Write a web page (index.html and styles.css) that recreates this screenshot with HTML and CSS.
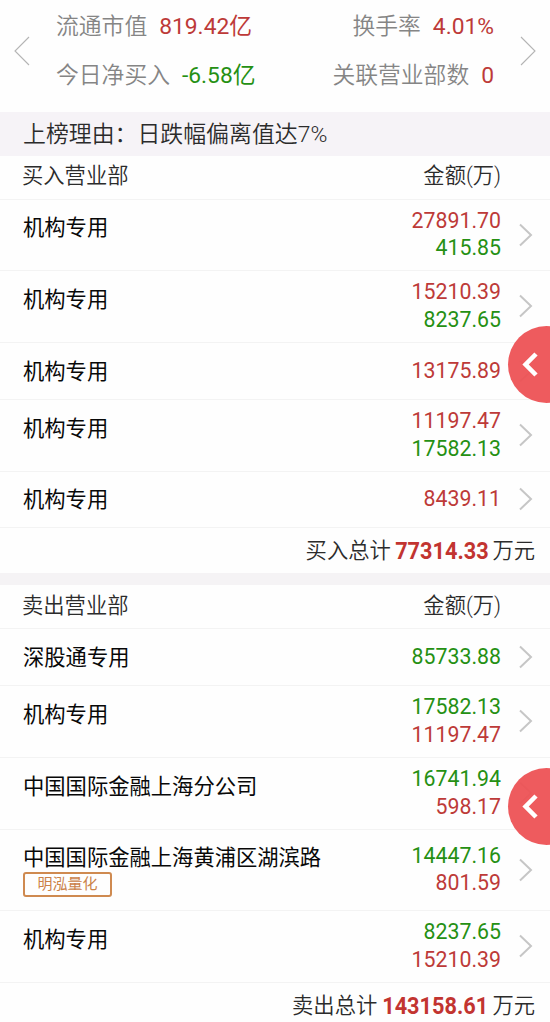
FILE: index.html
```html
<!DOCTYPE html>
<html lang="zh-CN">
<head>
<meta charset="utf-8">
<title>龙虎榜</title>
<link rel="stylesheet" href="styles.css">
</head>
<body>
<svg class="defs" width="0" height="0"><defs>
<symbol id="next" viewBox="0 0 14 24"><path d="M1 1.5 12 12 1 22.5" fill="none" stroke="#c6c6c6" stroke-width="2"/></symbol>
<symbol id="back" viewBox="0 0 16 26"><path d="M14 2 3.6 12.5 14 23" fill="none" stroke="#fff" stroke-width="4.6"/></symbol>
</defs></svg>
<main class="page">
<header class="summary">
<svg class="pager" viewBox="0 0 16 30"><path d="M15 1 1 15 15 29" fill="none" stroke="#b4b4b4" stroke-width="1.1"/></svg>
<div class="stats">
<div class="line"><span>流通市值<b class="red">819.42亿</b></span><span>换手率<b class="red">4.01%</b></span></div>
<div class="line"><span>今日净买入<b class="green">-6.58亿</b></span><span>关联营业部数<b class="red">0</b></span></div>
</div>
<svg class="pager" viewBox="0 0 16 30"><path d="M1 1 15 15 1 29" fill="none" stroke="#b4b4b4" stroke-width="1.1"/></svg>
</header>
<div class="reason">上榜理由：日跌幅偏离值达7%</div>

<section>
<div class="head"><span>买入营业部</span><span>金额(万)</span></div>
<div class="row first"><div class="name">机构专用</div><div class="nums"><span class="red">27891.70</span><span class="green">415.85</span></div><svg class="arrow"><use href="#next"/></svg></div>
<div class="row"><div class="name">机构专用</div><div class="nums"><span class="red">15210.39</span><span class="green">8237.65</span></div><svg class="arrow"><use href="#next"/></svg></div>
<div class="row single"><div class="name">机构专用</div><div class="nums"><span class="red">13175.89</span></div><svg class="arrow"><use href="#next"/></svg><div class="bubble"><svg><use href="#back"/></svg></div></div>
<div class="row"><div class="name">机构专用</div><div class="nums"><span class="red">11197.47</span><span class="green">17582.13</span></div><svg class="arrow"><use href="#next"/></svg></div>
<div class="row single last"><div class="name">机构专用</div><div class="nums"><span class="red">8439.11</span></div><svg class="arrow"><use href="#next"/></svg></div>
<div class="total"><span>买入总计</span><b>77314.33</b><span>万元</span></div>
</section>

<section class="sell">
<div class="head"><span>卖出营业部</span><span>金额(万)</span></div>
<div class="row single"><div class="name">深股通专用</div><div class="nums"><span class="green">85733.88</span></div><svg class="arrow"><use href="#next"/></svg></div>
<div class="row"><div class="name">机构专用</div><div class="nums"><span class="green">17582.13</span><span class="red">11197.47</span></div><svg class="arrow"><use href="#next"/></svg></div>
<div class="row"><div class="name">中国国际金融上海分公司</div><div class="nums"><span class="green">16741.94</span><span class="red">598.17</span></div><svg class="arrow"><use href="#next"/></svg><div class="bubble low"><svg><use href="#back"/></svg></div></div>
<div class="row tagged"><div class="name">中国国际金融上海黄浦区湖滨路<span class="tag">明泓量化</span></div><div class="nums"><span class="green">14447.16</span><span class="red">801.59</span></div><svg class="arrow"><use href="#next"/></svg></div>
<div class="row"><div class="name">机构专用</div><div class="nums"><span class="green">8237.65</span><span class="red">15210.39</span></div><svg class="arrow"><use href="#next"/></svg></div>
<div class="total"><span>卖出总计</span><b>143158.61</b><span>万元</span></div>
</section>
</main>
</body>
</html>
```
FILE: styles.css
```css
* { box-sizing: border-box; }
body { margin: 0; background: #fefefe; }
.defs { display: block; }
.page {
  width: 550px; height: 1022px; overflow: hidden;
  font-family: Roboto, "Noto Sans CJK SC", sans-serif;
  font-size: 21.3px; color: #2b2b2b;
}
.red { color: #bd3a38; }
.green { color: #259013; }

.summary { height: 112px; display: flex; align-items: flex-start; padding: 2px 14px 0; }
.pager { width: 16px; height: 30px; margin-top: 34px; flex: none; }
.stats { flex: 1; padding: 0 26px 0 26px; font-size: 22.8px; font-weight: 350; color: #858585; }
.line { height: 49px; line-height: 50px; display: flex; justify-content: space-between; white-space: nowrap; }
.line b { font-weight: 400; margin-left: 12px; }

.reason { height: 44px; line-height: 45px; padding-left: 23px; background: #f6f3f7; font-size: 22.9px; font-weight: 350; }

.head {
  height: 44px; line-height: 40px; padding: 0 49px 0 22px; font-weight: 350;
  display: flex; justify-content: space-between; border-bottom: 1px solid #f3f3f3;
}
.sell { border-top: 12px solid #f5f3f5; }
.sell .head { line-height: 42px; }

.row {
  position: relative; height: 72px; display: flex; align-items: center;
  padding: 0 17px 0 23px; border-bottom: 1px solid #f3f3f3;
}
.first { height: 71px; }
.single { height: 57px; }
.last { height: 56px; }
.tagged { height: 81px; }
.name { flex: 1; align-self: flex-start; line-height: 28px; padding-top: 15px; color: #080808; white-space: nowrap; }
.first .name, .last .name, .tagged .name { padding-top: 14px; }
.nums { display: flex; flex-direction: column; align-items: flex-end; line-height: 27.5px; padding-bottom: 2px; }
.single .nums { padding-bottom: 1px; }
.arrow { width: 14px; height: 24px; margin: 0 0 1px 18px; }
.tag {
  display: block; width: 89px; height: 25px; line-height: 21px; text-align: center;
  border: 2px solid #cf8a50; border-radius: 3px; color: #cb8248; font-size: 15px;
}

.bubble {
  position: absolute; left: 508px; top: -17px; width: 77px; height: 77px;
  border-radius: 50%; background: rgba(237, 82, 85, .95); z-index: 1;
}
.bubble.low { top: 10px; }
.bubble svg { position: absolute; left: 14px; top: 26px; width: 16px; height: 26px; }

.total { height: 45px; line-height: 46px; padding-right: 15px; display: flex; justify-content: flex-end; font-weight: 350; }
/* condensed digits: scaled from the right, with the freed width pulled back in */
.total b { color: #c23430; font-size: 23.6px; font-weight: 700; transform: scaleX(.92); transform-origin: right; margin: 0 4px 0 -4px; }
```
